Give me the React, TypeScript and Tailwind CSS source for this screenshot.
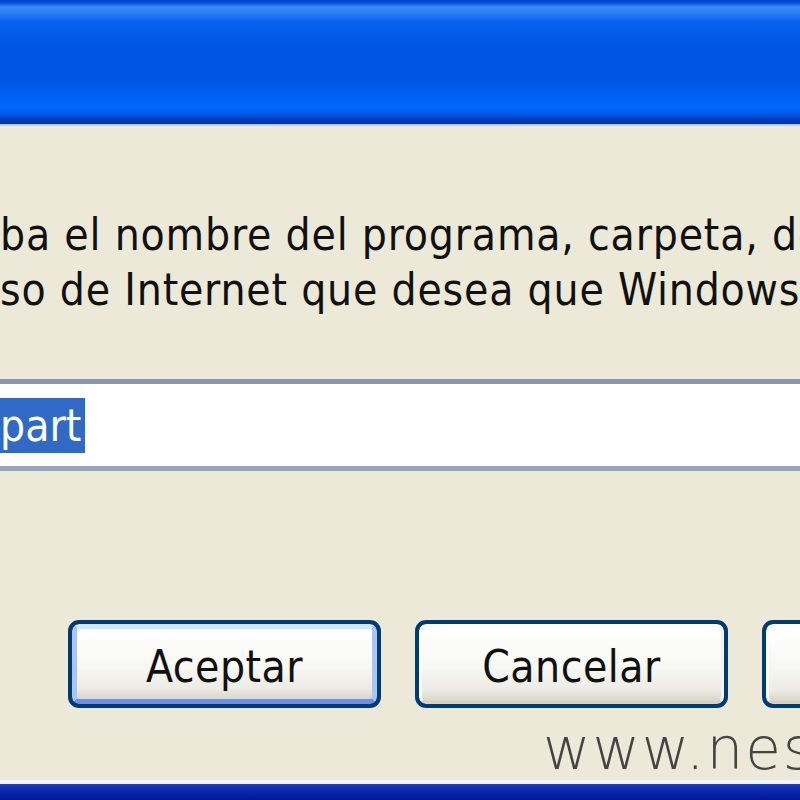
import React from "react";

const font = "font-['Tahoma','DejaVu_Sans_Condensed','DejaVu_Sans',sans-serif]";

function XpButton({ label, isDefault }: { label: string; isDefault?: boolean }) {
    return (
        <div className="w-[313px] h-[88px] shrink-0 rounded-[11px] border-[4px] border-[#003c74] bg-[#003c74] overflow-hidden">
            <div
                className={`h-full w-full rounded-[7px] ${
                    isDefault
                        ? "border-[5px] border-t-[#cee7ff] border-l-[#a8c5f5] border-r-[#a8c5f5] border-b-[#6e8fe6]"
                        : "border-[3px] border-t-white border-l-white border-r-[#f4f4ef] border-b-[#d6d0c5]"
                } bg-[linear-gradient(to_bottom,#ffffff_0%,#f7f7f3_55%,#ecebe4_85%,#d9d6ca_100%)] flex items-center justify-center pt-[6px]`}
            >
                <span className="text-[44px] leading-none tracking-[0.5px] text-[#111]">{label}</span>
            </div>
        </div>
    );
}

export default function App() {
    return (
        <div className={`w-[800px] h-[800px] overflow-hidden bg-[#ece9d8] flex flex-col ${font}`}>
            {/* title bar */}
            <div className="h-[124px] shrink-0 bg-[linear-gradient(to_bottom,#0043cf_0px,#0a50d8_3px,#3a8cf8_7px,#2d80f6_12px,#0763ee_22px,#0056e6_45px,#0054e1_75px,#0061f6_98px,#0066ff_108px,#0052da_116px,#0336b2_120px,#0336b2_124px)]" />
            <div className="h-[4px] shrink-0 bg-[linear-gradient(to_bottom,#9fb6e6,#dfe3ea,#f1efe6)]" />

            {/* message */}
            <div className="mt-[79px] text-[44px] leading-[55px] tracking-[0.8px] text-[#111] whitespace-nowrap">
                <div className="flex">
                    <span className="w-0 -ml-[14px] flex justify-end">Escri</span>
                    <span className="ml-[14px]">ba el nombre del programa, carpeta, documento o</span>
                </div>
                <div className="flex">
                    <span className="w-0 -ml-[5px] flex justify-end">recur</span>
                    <span className="ml-[5px]">so de Internet que desea que Windows abra.</span>
                </div>
            </div>

            {/* input */}
            <div className="mt-[62px] h-[92px] shrink-0 border-y-[5px] border-t-[#8797b0] border-b-[#95a4ba] bg-white flex items-center">
                <div className="flex text-[44px] leading-[55px] whitespace-nowrap">
                    <span className="w-0 flex justify-end bg-[#316ac5] text-white">disk</span>
                    <span className="bg-[#316ac5] text-white pr-[4px]">part</span>
                </div>
            </div>

            {/* buttons */}
            <div className="mt-[149px] pl-[68px] flex gap-[34px]">
                <XpButton label="Aceptar" isDefault />
                <XpButton label="Cancelar" />
                <XpButton label="Examinar..." />
            </div>

            {/* watermark */}
            <div className="mt-[10px] pl-[543px] h-[62px] flex items-center whitespace-nowrap font-['DejaVu_Sans',sans-serif] text-[58px] leading-none font-extralight tracking-[2px] text-[#444]">
                www.nestor
            </div>

            <div className="h-[4px] shrink-0 bg-[#f3f5fb]" />
            <div className="flex-1 bg-[linear-gradient(to_bottom,#1a3fc4,#0a2aa8_40%,#00179a)]" />
        </div>
    );
}
